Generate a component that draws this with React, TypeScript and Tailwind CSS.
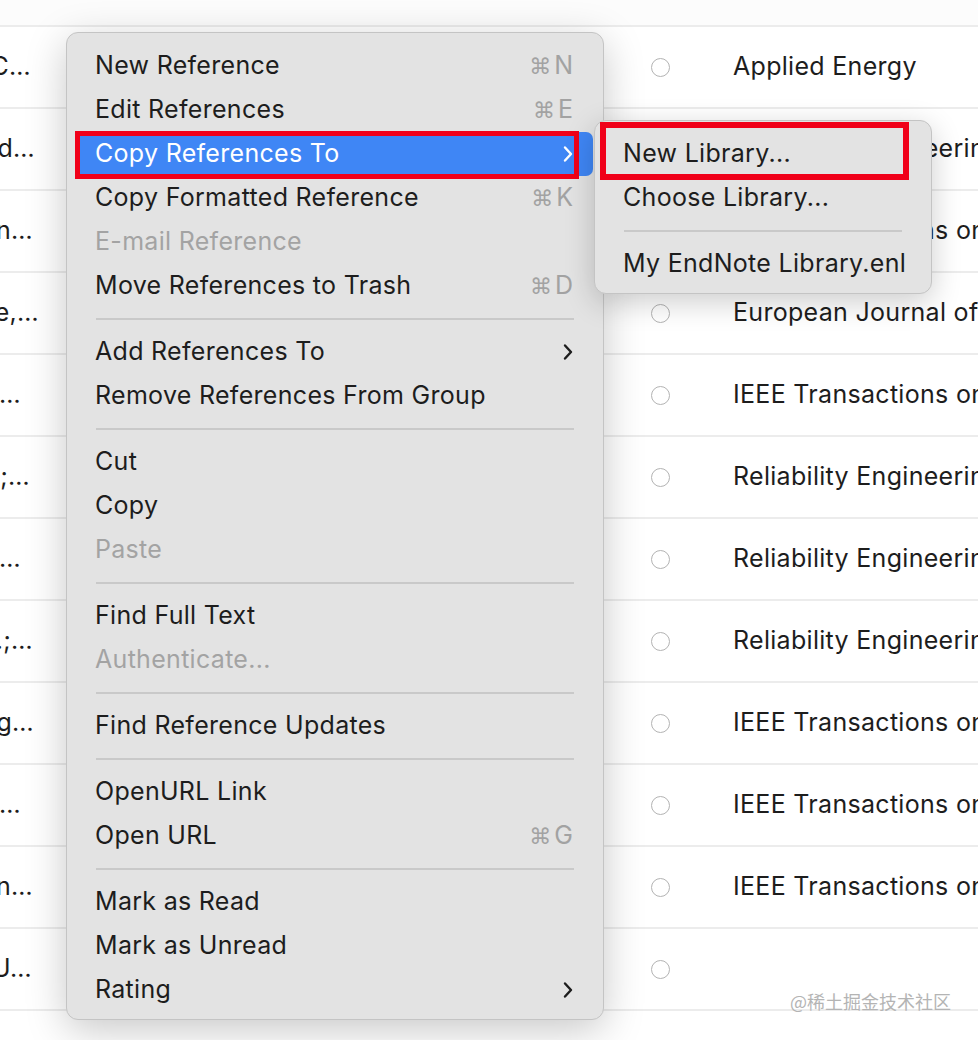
import * as React from "react";

// Background table rows (left fragment column + journal column)
const rows = [
  { left: "Wang, C…", w: 31, journal: "Applied Energy" },
  { left: "Zhang, Xd…", w: 35, journal: "Reliability Engineering & System Safety" },
  { left: "Chen, Yn…", w: 33, journal: "IEEE Transactions on Reliability" },
  { left: "Li, Zhe,…", w: 39, journal: "European Journal of Operational Research" },
  { left: "Liu, M. …", w: 21, journal: "IEEE Transactions on Industrial Electronics" },
  { left: "Yang, J.;…", w: 30, journal: "Reliability Engineering & System Safety" },
  { left: "Xu, H. …", w: 21, journal: "Reliability Engineering & System Safety" },
  { left: "Sun, L.;…", w: 33, journal: "Reliability Engineering & System Safety" },
  { left: "Zhao, Yg…", w: 34, journal: "IEEE Transactions on Power Systems" },
  { left: "Wu, K. …", w: 21, journal: "IEEE Transactions on Reliability" },
  { left: "Zhou, Rn…", w: 33, journal: "IEEE Transactions on Smart Grid" },
  { left: "Huang, U…", w: 32, journal: "" },
];

type Item =
  | { sep: true }
  | { label: string; shortcut?: string; disabled?: boolean; submenu?: boolean; active?: boolean };

const menu: Item[] = [
  { label: "New Reference", shortcut: "N" },
  { label: "Edit References", shortcut: "E" },
  { label: "Copy References To", submenu: true, active: true },
  { label: "Copy Formatted Reference", shortcut: "K" },
  { label: "E-mail Reference", disabled: true },
  { label: "Move References to Trash", shortcut: "D" },
  { sep: true },
  { label: "Add References To", submenu: true },
  { label: "Remove References From Group" },
  { sep: true },
  { label: "Cut" },
  { label: "Copy" },
  { label: "Paste", disabled: true },
  { sep: true },
  { label: "Find Full Text" },
  { label: "Authenticate...", disabled: true },
  { sep: true },
  { label: "Find Reference Updates" },
  { sep: true },
  { label: "OpenURL Link" },
  { label: "Open URL", shortcut: "G" },
  { sep: true },
  { label: "Mark as Read" },
  { label: "Mark as Unread" },
  { label: "Rating", submenu: true },
];

function Chevron({ white }: { white?: boolean }) {
  return (
    <svg width="10" height="18" viewBox="0 0 10 18" className={white ? "text-white" : "text-[#1d1d1d]"}>
      <path d="M2 2.5 L8 9 L2 15.5" fill="none" stroke="currentColor" strokeWidth="2.4" strokeLinecap="round" strokeLinejoin="round" />
    </svg>
  );
}

function MenuRow({ item }: { item: Item }) {
  if ("sep" in item) {
    return (
      <div className="h-[22px] flex items-center mx-[19px]">
        <div className="h-[2px] w-full bg-[#c9c9c9]" />
      </div>
    );
  }
  const color = item.active ? "text-white" : item.disabled ? "text-[#a3a3a3]" : "text-[#1d1d1d]";
  return (
    <div
      className={`h-[44px] flex items-center justify-between pl-[18px] pr-[20px] rounded-[7px] ${
        item.active ? "bg-[#3f86f5]" : ""
      } ${color}`}
    >
      <span>{item.label}</span>
      {item.shortcut && (
        <span className="text-[#a2a2a2] flex items-center gap-[3px] tracking-normal">
          <span className="text-[22px] font-['DejaVu_Sans']">⌘</span>
          <span>{item.shortcut}</span>
        </span>
      )}
      {item.submenu && <Chevron white={item.active} />}
    </div>
  );
}

export default function App() {
  return (
    <div className="relative w-[978px] h-[1040px] bg-white overflow-hidden font-['Inter','Liberation_Sans',sans-serif] text-[25px] tracking-[0.3px] text-[#1d1d1d]">
      {/* Table */}
      <div className="h-[25px] bg-[#fcfcfc]" />
      {rows.map((r, i) => (
        <div key={i} className="h-[82px] border-t-2 border-[#ececec] flex items-center">
          <div className="w-[40px] shrink-0">
            <div className="flex justify-end overflow-hidden whitespace-nowrap" style={{ width: r.w }}>
              {r.left}
            </div>
          </div>
          <div className="w-[611px] shrink-0" />
          <div className="w-[19px] h-[19px] shrink-0 rounded-full border-[1.5px] border-[#b3b3b3]" />
          <div className="ml-[63px] whitespace-nowrap">{r.journal}</div>
        </div>
      ))}
      <div className="h-[82px] border-t-2 border-[#ececec] flex items-start pl-[52px] whitespace-nowrap pt-[30px]">
        Illustrated hybrid fault tolerant control of the sheltered Bifurcation dynamics
      </div>

      {/* Watermark */}
      <div className="absolute left-[790px] top-[988px] text-[18px] tracking-normal text-[#b4b4b4] font-['Noto_Sans_CJK_SC',sans-serif]">
        @稀土掘金技术社区
      </div>

      {/* Context menu */}
      <div className="absolute left-[66px] top-[32px] w-[538px] h-[988px] rounded-[12px] bg-[#e3e3e3] border border-[#c4c4c4] shadow-[0_10px_40px_rgba(0,0,0,0.22)] pt-[11px] px-[10px]">
        {menu.map((item, i) => (
          <MenuRow key={i} item={item} />
        ))}
        {/* highlight frame */}
        <div className="absolute left-[8px] top-[98px] w-[504px] h-[48px] border-[5px] border-[#f00019]" />
      </div>

      {/* Submenu */}
      <div className="absolute left-[594px] top-[120px] w-[338px] h-[174px] rounded-[12px] bg-[#e3e3e3] border border-[#c4c4c4] shadow-[0_8px_30px_rgba(0,0,0,0.2)] pt-[11px] px-[10px]">
        <div className="h-[44px] flex items-center pl-[18px]">New Library...</div>
        <div className="h-[44px] flex items-center pl-[18px]">Choose Library...</div>
        <div className="h-[22px] flex items-center ml-[19px] mr-[19px]">
          <div className="h-[2px] w-full bg-[#c9c9c9]" />
        </div>
        <div className="h-[44px] flex items-center pl-[18px] whitespace-nowrap">My EndNote Library.enl</div>
        <div className="absolute left-[5px] top-[1px] w-[309px] h-[58px] border-[6px] border-[#f00019]" />
      </div>
    </div>
  );
}
